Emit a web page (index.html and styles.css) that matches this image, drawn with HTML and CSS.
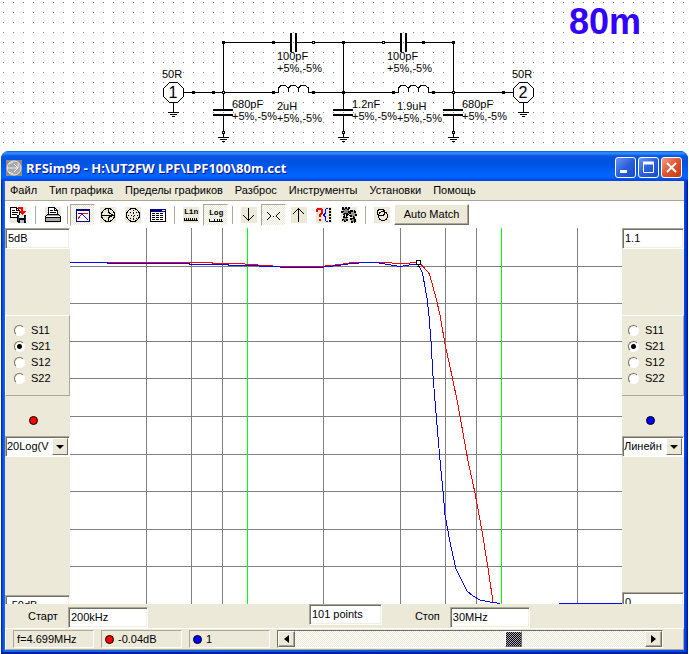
FILE: index.html
```html
<!DOCTYPE html>
<html lang="ru">

<head>
    <meta charset="UTF-8">
    <meta name="viewport" content="width=device-width, initial-scale=1.0">
    <title>RFSim99</title>
    <link rel="stylesheet" href="styles.css">
</head>

<body>
    <!-- Circuit -->
    <svg class="schematic" role="img" aria-label="80m low pass filter">
        <defs>
            <pattern id="dots" width="10" height="10" patternUnits="userSpaceOnUse">
                <rect x="3" y="2" width="1" height="1" fill="#808080" />
            </pattern>
            <g id="ground">
                <path d="M-5 0.5H6M-3 2.5H4M-1 4.5H2" />
            </g>
            <g id="shunt">
                <path d="M0.5 0V17M0.5 24V45" />
                <path class="plate" d="M-10 18H10M-10 23H10" />
                <rect class="open" x="-0.5" y="39.5" width="2" height="2" />
                <use href="#ground" y="45" />
            </g>
            <g id="coil">
                <path d="M0.5 1V-4L3.5 -7H6.5L10.5 -4V0V-4L13.5 -7H16.5L20.5 -4V0V-4L23.5 -7H26.5L30.5 -4V1" />
            </g>
            <g id="port">
                <path d="M6.5 0.5H14.5L20.5 6.5V14.5L14.5 20.5H6.5L0.5 14.5V6.5ZM10.5 21V31" />
                <use href="#ground" x="10" y="30" />
            </g>
        </defs>
        <rect width="100%" height="100%" fill="url(#dots)" />

        <g class="wires">
            <path d="M223.5 92V42.5H290M297 42.5H400M407 42.5H453.5V92M343.5 42V92" />
            <path d="M184 92.5H278M308 92.5H398M428 92.5H513" />
            <path class="plate" d="M291 33V52M296 33V52M401 33V52M406 33V52" />
            <use href="#coil" x="278" y="92" />
            <use href="#coil" x="398" y="92" />
            <use href="#shunt" x="223" y="92" />
            <use href="#shunt" x="343" y="92" />
            <use href="#shunt" x="453" y="92" />
            <use href="#port" x="163" y="82" />
            <use href="#port" x="513" y="82" />
        </g>

        <g class="joints">
            <path d="M222 42.5h3M272 42.5h3M342 42.5h3M422 42.5h3M452 42.5h3M192 92.5h3M212 92.5h3M272 92.5h3M312 92.5h3M342 92.5h3M392 92.5h3M432 92.5h3M502 92.5h3" />
            <rect class="open" x="312.5" y="41.5" width="2" height="2" />
            <rect class="open" x="382.5" y="41.5" width="2" height="2" />
            <rect class="open" x="222.5" y="91.5" width="2" height="2" />
            <rect class="open" x="452.5" y="91.5" width="2" height="2" />
        </g>

        <g class="values">
            <text x="162" y="78">50R</text>
            <text x="512" y="78">50R</text>
            <text x="277" y="60">100pF</text>
            <text x="277" y="72">+5%,-5%</text>
            <text x="387" y="60">100pF</text>
            <text x="387" y="72">+5%,-5%</text>
            <text x="232" y="108">680pF</text>
            <text x="232" y="120">+5%,-5%</text>
            <text x="277" y="110">2uH</text>
            <text x="277" y="122">+5%,-5%</text>
            <text x="352" y="108">1.2nF</text>
            <text x="352" y="120">+5%,-5%</text>
            <text x="397" y="110">1.9uH</text>
            <text x="397" y="122">+5%,-5%</text>
            <text x="462" y="108">680pF</text>
            <text x="462" y="120">+5%,-5%</text>
            <text class="port-number" x="173" y="98">1</text>
            <text class="port-number" x="523" y="98">2</text>
        </g>
        <text class="band" x="569" y="34">80m</text>
    </svg>

    <!-- Program window -->
    <div class="window">
        <header class="titlebar">
            <svg class="app-icon" width="16" height="16" viewBox="0 0 16 16">
                <rect width="16" height="16" fill="#8c8c8c" />
                <circle cx="8" cy="8" r="7" fill="#a8a8a8" stroke="#e8e8e8" />
                <path d="M1 8H11M8 4L12 8L8 12M3 4L7 2M3 12L7 14M12 4V8" fill="none" stroke="#eee" />
            </svg>
            <h1 class="title">RFSim99 - H:\UT2FW LPF\LPF100\80m.cct</h1>
            <button class="caption" type="button" aria-label="Minimize">
                <svg width="19" height="19"><path d="M4 13.5H11" stroke="#fff" stroke-width="3" /></svg>
            </button>
            <button class="caption" type="button" aria-label="Maximize">
                <svg width="19" height="19"><path d="M4.5 4V14.5H14.5V4M4 5.5H15" fill="none" stroke="#fff" /><path d="M4 5H15" stroke="#fff" stroke-width="3" /></svg>
            </button>
            <button class="caption close" type="button" aria-label="Close">
                <svg width="19" height="19"><path d="M5 5L14 14M14 5L5 14" stroke="#fff" stroke-width="2" /></svg>
            </button>
        </header>

        <nav class="menu">
            <a href="#">Файл</a>
            <a href="#">Тип графика</a>
            <a href="#">Пределы графиков</a>
            <a href="#">Разброс</a>
            <a href="#">Инструменты</a>
            <a href="#">Установки</a>
            <a href="#">Помощь</a>
        </nav>

        <div class="toolbar">
            <button class="tool" type="button" aria-label="Copy to file">
                <svg width="16" height="16" viewBox="0 0 16 16">
                    <rect width="16" height="16" fill="#ece9d8" />
                    <path d="M0.5 0.5H6.5L9.5 3.5V10.5H0.5Z" fill="#fff" stroke="#000" />
                    <path d="M6.5 0V3.5H10M2 3.5H5M2 5.5H8M2 7.5H7" fill="none" stroke="#000" />
                    <path d="M8 0H12L13 1V4H16L12 8L8 4H11V2H8Z" fill="#f00" />
                    <path d="M7 8H16V16H8L7 15Z" fill="#000" />
                    <path d="M9 8H14V11H9Z" fill="#ece9d8" />
                    <path d="M10 13H14V16H10Z" fill="#b8b8c8" />
                    <path d="M8 9V14M15 9V15" stroke="#003c74" />
                </svg>
            </button>
            <span class="separator wide"></span>
            <button class="tool" type="button" aria-label="Print">
                <svg width="16" height="16" viewBox="0 0 16 16">
                    <rect width="16" height="16" fill="#ece9d8" />
                    <path d="M3.5 8V0.5H9.5L12.5 3.5V8" fill="#fff" stroke="#000" />
                    <path d="M9.5 0V3.5H13M5 3.5H8M5 5.5H11" fill="none" stroke="#000" />
                    <path d="M2.5 7.5H13.5L15.5 9.5V14.5H0.5V9.5Z" fill="#aaa" stroke="#000" />
                    <path d="M0 10.5H16" stroke="#000" />
                    <path d="M1 9.5H15" stroke="#fff" />
                </svg>
            </button>
            <span class="separator narrow"></span>
            <button class="tool pressed" type="button" aria-label="Rectangular plot">
                <svg width="16" height="16" viewBox="0 0 16 16">
                    <rect x="2" y="3" width="12" height="11" fill="#fff" />
                    <path d="M1.5 2V14.5H14.5V2" fill="none" stroke="#000080" />
                    <path d="M1 2.5H15" stroke="#000080" stroke-width="2" />
                    <path d="M3 12L6 8L9 6L13 6" fill="none" stroke="#f00" />
                    <path d="M3 6L7 7L9 9L13 13" fill="none" stroke="#00f" />
                </svg>
            </button>
            <button class="tool" type="button" aria-label="Smith chart">
                <svg width="16" height="16" viewBox="0 0 16 16">
                    <rect width="16" height="16" fill="#ece9d8" />
                    <circle cx="8" cy="8" r="6.5" fill="none" stroke="#000" />
                    <path d="M1 8.5H14M8 2V4Q9 7 14 8.5Q9 9 8 12V14" fill="none" stroke="#000" />
                </svg>
            </button>
            <button class="tool" type="button" aria-label="Polar chart">
                <svg width="16" height="16" viewBox="0 0 16 16">
                    <rect width="16" height="16" fill="#ece9d8" />
                    <circle cx="8" cy="8" r="6.5" fill="none" stroke="#000" />
                    <path d="M5 5.5H12M3 8.5H14M5 11.5H12M8.5 3V14" stroke="#000" stroke-dasharray="1 2" />
                </svg>
            </button>
            <button class="tool" type="button" aria-label="Table">
                <svg width="16" height="16" viewBox="0 0 16 16">
                    <rect x="0.5" y="2.5" width="15" height="12" fill="#fff" stroke="#000" />
                    <path d="M0 3.5H16" stroke="#000080" stroke-width="3" />
                    <path d="M12 3.5H15" stroke="#fff" />
                    <path d="M2 6.5H14M2 8.5H14M2 10.5H14M2 12.5H14" stroke="#000" stroke-dasharray="3 1" />
                </svg>
            </button>
            <span class="separator"></span>
            <button class="tool" type="button" aria-label="Linear scale">
                <svg width="16" height="16" viewBox="0 0 16 16">
                    <rect width="16" height="16" fill="#ece9d8" />
                    <text class="scale-name" x="1" y="7">Lin</text>
                    <path d="M1 13.5H15M1.5 11V14M3.5 11V14M5.5 11V14M7.5 11V14M9.5 11V14M11.5 11V14M13.5 11V14" stroke="#000" />
                </svg>
            </button>
            <button class="tool pressed" type="button" aria-label="Logarithmic scale">
                <svg width="16" height="16" viewBox="0 0 16 16">
                    <text class="scale-name" x="1" y="8">Log</text>
                    <path d="M1 14.5H15M1.5 12V15M6.5 12V15M9.5 12V15M11.5 12V15M13.5 12V15" stroke="#000" />
                </svg>
            </button>
            <span class="separator"></span>
            <button class="tool" type="button" aria-label="Marker down">
                <svg width="16" height="16" viewBox="0 0 16 16">
                    <rect width="16" height="16" fill="#ece9d8" />
                    <path d="M7.5 1V14M2 8L7.5 13.5L13 8" fill="none" stroke="#000" />
                </svg>
            </button>
            <button class="tool pressed" type="button" aria-label="Marker between">
                <svg width="16" height="16" viewBox="0 0 16 16">
                    <path d="M1 5L5 9L1 13M14 5L10 9L14 13M7 9.5H8" fill="none" stroke="#000" />
                </svg>
            </button>
            <button class="tool" type="button" aria-label="Marker up">
                <svg width="16" height="16" viewBox="0 0 16 16">
                    <rect width="16" height="16" fill="#ece9d8" />
                    <path d="M7.5 15V2M2 7L7.5 1.5L13 7" fill="none" stroke="#000" />
                </svg>
            </button>
            <button class="tool" type="button" aria-label="Component values">
                <svg width="16" height="16" viewBox="0 0 16 16">
                    <rect width="16" height="16" fill="#ece9d8" />
                    <path d="M1 5V3L2 2H5L6 3V6L4 8V10M4 12V14" fill="none" stroke="#f00" stroke-width="2" />
                    <path d="M11.5 1.5Q9.5 1.5 9.5 4V6L7.5 8L9.5 10V12Q9.5 14.5 11.5 14.5" fill="none" stroke="#00f" />
                    <path d="M14 1V15" stroke="#000" stroke-width="2" stroke-dasharray="2 1" />
                </svg>
            </button>
            <button class="tool" type="button" aria-label="Tune">
                <svg width="16" height="16" viewBox="0 0 16 16">
                    <rect width="16" height="16" fill="#ece9d8" />
                    <circle cx="5" cy="4" r="3.5" fill="#888" stroke="#000" stroke-width="3" stroke-dasharray="2 1" />
                    <circle cx="12" cy="7" r="3" fill="#999" stroke="#000" stroke-width="2" stroke-dasharray="2 1" />
                    <circle cx="4" cy="12" r="2.5" fill="#888" stroke="#000" stroke-width="2" stroke-dasharray="2 1" />
                    <circle cx="12" cy="13" r="2" fill="#888" stroke="#000" stroke-width="2" stroke-dasharray="2 1" />
                </svg>
            </button>
            <span class="separator"></span>
            <button class="tool" type="button" aria-label="Stability circles">
                <svg width="16" height="16" viewBox="0 0 16 16">
                    <rect width="16" height="16" fill="#ece9d8" />
                    <circle cx="9" cy="9" r="4.5" fill="none" stroke="#000" />
                    <circle cx="7" cy="5.5" r="3.5" fill="none" stroke="#000" />
                </svg>
            </button>
            <button class="match" type="button">Auto Match</button>
        </div>

        <main class="plot-area">
            <aside class="side side-left">
                <input class="field" type="text" value="5dB" aria-label="Left maximum">
                <fieldset class="params">
                    <label><input type="radio" name="left">S11</label>
                    <label><input type="radio" name="left" checked>S21</label>
                    <label><input type="radio" name="left">S12</label>
                    <label><input type="radio" name="left">S22</label>
                </fieldset>
                <span class="dot red"></span>
                <div class="combo">
                    <select aria-label="Left format"><option>20Log(V</option></select>
                    <span class="arrow"></span>
                </div>
                <input class="field minimum" type="text" value="-50dB" aria-label="Left minimum">
            </aside>

            <svg class="chart" viewBox="0 0 552 376" preserveAspectRatio="none">
                <path class="grid" d="M0 38.5H552M0 75.5H552M0 113.5H552M0 150.5H552M0 188.5H552M0 226.5H552M0 263.5H552M0 301.5H552M0 338.5H552" />
                <path class="grid" d="M76.5 0V376M121.5 0V376M152.5 0V376M253.5 0V376M330.5 0V376M375.5 0V376M406.5 0V376M507.5 0V376" />
                <path class="decade" d="M177.5 0V376M431.5 0V376" />
                <path class="trace red-trace" d="M0 34.5H142V35.5H170L180 36.5L210 38.5H250L270 36.5L282 34.5H320L324 35.5H338L342 34.5H349L354 39.5L359 45.5L360 48L366 70L370 87L375 116L382 148L388 177L398 233L405 265L412 303L418 340L423 374" />
                <path class="trace blue-trace" d="M0 34.5H37V35.5H119V36.5H158V37.5H178L200 38.5L220 39.5H250L268 37.5L282 35.5L296 34.5H306L318 36.5L330 38.5L342 36.5H348L352 44L353 48L357 70L359 88L361 113L363 148L366 185L370 232L373 263L375 287L380 314L386 341L397 363L403 368L410 372L423 374.5L430 375.5M489 375.5H552" />
                <rect x="346.5" y="32.5" width="4" height="4" fill="#fff" stroke="#000" />
                <path d="M347 38.5H350" stroke="#000" />
            </svg>

            <aside class="side side-right">
                <input class="field" type="text" value="1.1" aria-label="Right maximum">
                <fieldset class="params">
                    <label><input type="radio" name="right">S11</label>
                    <label><input type="radio" name="right" checked>S21</label>
                    <label><input type="radio" name="right">S12</label>
                    <label><input type="radio" name="right">S22</label>
                </fieldset>
                <span class="dot blue"></span>
                <div class="combo">
                    <select aria-label="Right format"><option>Линейн</option></select>
                    <span class="arrow"></span>
                </div>
                <input class="field minimum" type="text" value="0" aria-label="Right minimum">
            </aside>
        </main>

        <div class="range">
            <label for="start">Старт</label>
            <input class="field" id="start" type="text" value="200kHz">
            <input class="field points" type="text" value="101 points" aria-label="Points">
            <label for="stop">Стоп</label>
            <input class="field" id="stop" type="text" value="30MHz">
        </div>

        <footer class="status">
            <output class="cell">f=4.699MHz</output>
            <output class="cell"><span class="dot red"></span>-0.04dB</output>
            <output class="cell"><span class="dot blue"></span>1</output>
            <div class="scroll">
                <button class="step" type="button" aria-label="Left"><svg width="5" height="8"><path d="M5 0V8L0 4Z" /></svg></button>
                <input type="range" min="0" max="100" value="63" aria-label="Frequency">
                <button class="step" type="button" aria-label="Right"><svg width="5" height="8"><path d="M0 0V8L5 4Z" /></svg></button>
            </div>
        </footer>
    </div>
</body>

</html>
```
FILE: styles.css
```css
* {
    box-sizing: border-box;
}

body {
    margin: 0;
    background: #fff;
    color: #000;
    font-family: "Liberation Sans", Arial, sans-serif;
    font-size: 11px;
    line-height: 13px;
}

button,
input,
select {
    margin: 0;
    font: inherit;
    color: inherit;
}

/* circuit */

.schematic {
    display: block;
    width: 100%;
    height: 151px;
    shape-rendering: crispEdges;
}

.wires {
    fill: none;
    stroke: #000;
}

.plate {
    stroke-width: 2;
}

.joints {
    stroke: #000;
    stroke-width: 3;
}

.open {
    fill: #fff;
    stroke: #000;
    stroke-width: 1;
}

.port-number {
    font-size: 16px;
    text-anchor: middle;
}

.band {
    font-size: 36px;
    font-weight: bold;
    fill: #30f;
}

/* window */

.window {
    margin: 0 1px;
    padding: 0 4px 4px;
    border-radius: 8px 8px 0 0;
    background: linear-gradient(90deg, #0019cf 0, #0855dd 2px, #166aee 4px, #0855dd 50%, #0048f1 calc(100% - 3px), #00138c 100%);
    box-shadow: inset 0 -2px #001ea0;
}

.titlebar {
    display: flex;
    align-items: center;
    gap: 2px;
    height: 30px;
    margin: 0 -4px;
    padding: 3px 6px 0 5px;
    border-radius: 8px 8px 0 0;
    background: linear-gradient(#0058e6 0, #3a93ff 2px, #0855e0 5px, #0053e1 12px, #0061fc 22px, #0066ff 26px, #003dd7 100%);
}

.title {
    flex: 1;
    margin: 0 0 0 2px;
    font: bold 13px/18px "Noto Sans", "Open Sans", sans-serif;
    color: #fff;
    text-shadow: 1px 1px #0f1089;
    white-space: nowrap;
}

.caption {
    width: 21px;
    height: 21px;
    padding: 0;
    border: 1px solid #fff;
    border-radius: 3px;
    background: linear-gradient(135deg, #6b96f2, #2a5fdc 50%, #1a4bc4);
}

.caption svg {
    display: block;
}

.close {
    background: linear-gradient(135deg, #f0a088, #e0532e 50%, #c33a14);
}

.menu {
    display: flex;
    gap: 12px;
    height: 19px;
    padding: 3px 5px;
    background: #ece9d8;
}

.menu a {
    color: #000;
    text-decoration: none;
    white-space: nowrap;
}

.toolbar {
    display: flex;
    align-items: center;
    height: 28px;
    border-top: 1px solid #aca899;
    background: #fff;
}

.tool {
    display: flex;
    align-items: center;
    justify-content: center;
    width: 25px;
    height: 22px;
    padding: 0;
    border: 1px solid transparent;
    background: none;
}

.tool svg {
    flex: none;
    shape-rendering: crispEdges;
}

.pressed {
    border-color: #aca899 #fff #fff #aca899;
    background: repeating-conic-gradient(#fff 0 25%, #ece9d8 0 50%) 0 0 / 2px 2px;
}

.scale-name {
    font: bold 8px "Liberation Mono", monospace;
}

.separator {
    width: 8px;
    height: 18px;
    background: linear-gradient(#aca899, #aca899) center / 1px 100% no-repeat;
}

.wide {
    width: 10px;
}

.narrow {
    width: 5px;
}

.match {
    width: 75px;
    height: 21px;
    padding: 0;
    border: 1px solid;
    border-color: #fff #716f64 #716f64 #fff;
    background: #ece9d8;
    box-shadow: inset -1px -1px #aca899;
    white-space: nowrap;
}

/* plot */

.plot-area {
    display: flex;
    height: 376px;
    background: #fff;
}

.side {
    display: flex;
    flex-direction: column;
    flex: none;
    overflow: hidden;
    background: #ece9d8;
}

.side-left {
    width: 65px;
}

.side-right {
    width: 62px;
}

.chart {
    flex: 1;
    min-width: 0;
    height: 376px;
    fill: none;
    shape-rendering: crispEdges;
}

.grid {
    stroke: #808080;
}

.decade {
    stroke: #0f0;
}

.red-trace {
    stroke: #f00;
}

.blue-trace {
    stroke: #00f;
}

.field {
    flex: none;
    width: 80px;
    height: 21px;
    padding: 0 2px 1px;
    border: 1px solid;
    border-color: #aca899 #fff #fff #aca899;
    border-radius: 0;
    background: #fff;
    box-shadow: inset 1px 1px #716f64, inset -1px -1px #f1efe2;
    outline: none;
}

.side .field {
    width: 100%;
}

.params {
    flex: none;
    height: 81px;
    min-width: 0;
    margin: 66px 0 0;
    padding: 6px 0 0 8px;
    border: 1px solid;
    border-color: #fff #aca899 #aca899 #fff;
}

.side-right .params {
    padding-left: 6px;
    border-left: 0;
}

.params label {
    display: flex;
    align-items: center;
    gap: 6px;
    height: 16px;
}

.params input {
    width: 11px;
    height: 11px;
    appearance: none;
    border: 1px solid;
    border-color: #716f64 #fff #fff #716f64;
    border-radius: 50%;
    background: #fff;
}

.params input:checked {
    background: radial-gradient(circle, #000 2px, #fff 3px);
}

.dot {
    flex: none;
    width: 9px;
    height: 9px;
    border: 1px solid #000;
    border-radius: 50%;
}

.red {
    background: #f00;
}

.blue {
    background: #00f;
}

.side .dot {
    margin: 20px 0 11px 24px;
}

.combo {
    display: flex;
    flex: none;
    height: 21px;
    padding: 1px;
    border: 1px solid;
    border-color: #aca899 #fff #fff #aca899;
    background: #fff;
    box-shadow: inset 1px 1px #716f64;
}

.combo select {
    flex: 1;
    min-width: 0;
    padding: 0;
    border: 0;
    appearance: none;
    background: transparent;
    outline: none;
}

.arrow {
    flex: none;
    width: 16px;
    border: 1px solid;
    border-color: #fff #716f64 #716f64 #fff;
    background: #ece9d8;
}

.arrow::before {
    content: "";
    display: block;
    margin: 6px 3px;
    border: 4px solid transparent;
    border-top-color: #000;
    border-bottom: 0;
}

.side .minimum {
    margin-top: 138px;
}

.side-right .minimum {
    margin-top: 135px;
}

/* frequency range */

.range {
    display: flex;
    align-items: center;
    height: 24px;
    padding-left: 23px;
    background: #ece9d8;
}

.range .field {
    margin: 2px 0 0 10px;
}

.range .points {
    width: 73px;
    margin: 0 33px 3px 161px;
}

.status {
    display: flex;
    align-items: center;
    gap: 7px;
    height: 22px;
    padding: 0 20px 0 7px;
    border: 1px solid;
    border-color: #fff #aca899 #aca899 #fff;
    background: #ece9d8;
}

.cell {
    display: flex;
    align-items: center;
    flex: none;
    gap: 4px;
    width: 81px;
    height: 18px;
    padding: 0 3px;
    border: 1px solid;
    border-color: #aca899 #fff #fff #aca899;
}

.scroll {
    display: flex;
    flex: 1;
    min-width: 0;
    height: 18px;
    border: 1px solid;
    border-color: #716f64 #fff #fff #716f64;
}

.step {
    display: flex;
    align-items: center;
    justify-content: center;
    width: 17px;
    padding: 0;
    border: 1px solid;
    border-color: #fff #716f64 #716f64 #fff;
    background: #ece9d8;
    box-shadow: inset -1px -1px #aca899;
}

.scroll input {
    flex: 1;
    min-width: 0;
    height: 16px;
    appearance: none;
    background: repeating-conic-gradient(#fff 0 25%, #ece9d8 0 50%) 0 0 / 2px 2px;
}

.scroll input::-webkit-slider-thumb {
    width: 17px;
    height: 16px;
    appearance: none;
    border: 1px solid;
    border-color: #fff #716f64 #716f64 #fff;
    background: repeating-conic-gradient(#000 0 25%, #aca8b9 0 50%) 0 0 / 2px 2px;
}
```
